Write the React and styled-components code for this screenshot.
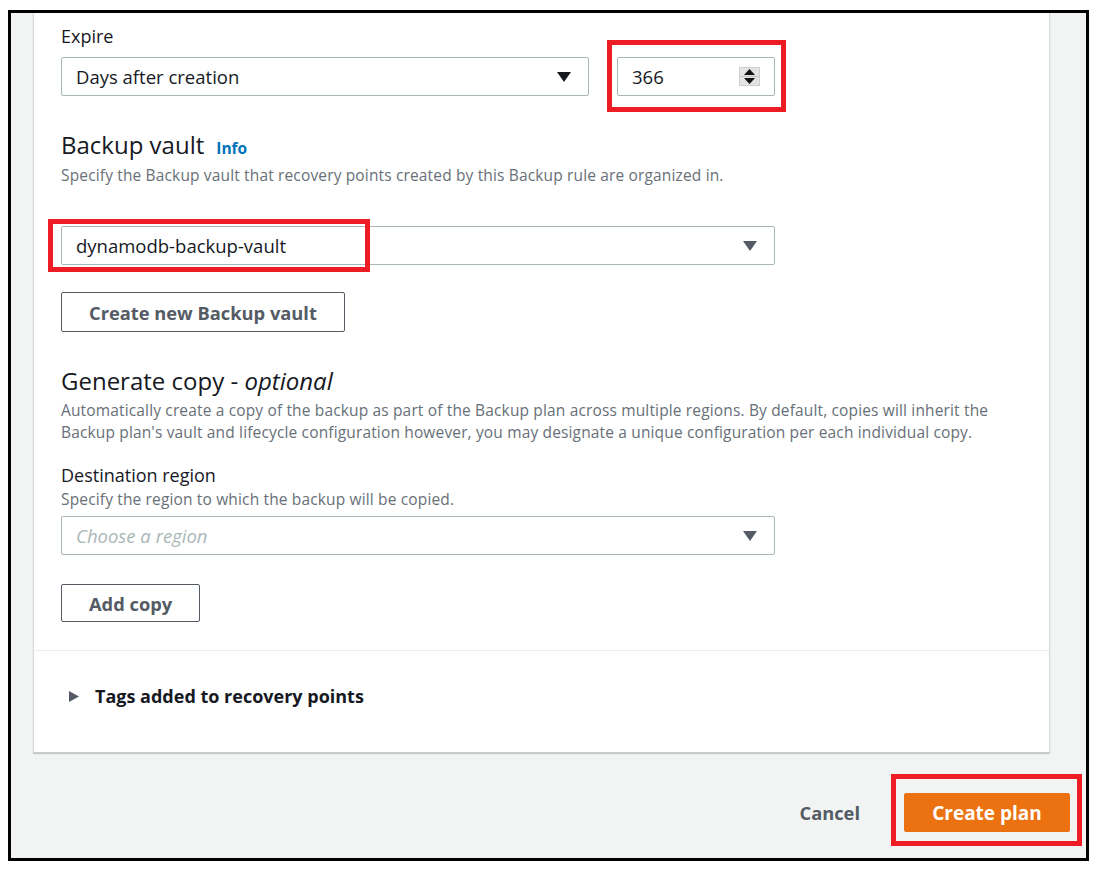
import React from "react";
import styled, { createGlobalStyle, css } from "styled-components";

const Global = createGlobalStyle`
  html, body { margin: 0; padding: 0; background: #ffffff; }
  body { font-family: "Open Sans", "Noto Sans", Arial, sans-serif; color: #16191f; }
  * { box-sizing: border-box; }
`;

const Frame = styled.div`
  margin: 10px 0 0 8px;
  width: 1081px;
  height: 851px;
  border: 3px solid #000;
  background: #f2f3f3;
  overflow: hidden;
  display: flex;
  flex-direction: column;
`;

const Card = styled.div`
  margin-left: 22px;
  width: 1017px;
  background: #ffffff;
  border-left: 1px solid #d5dbdb;
  border-right: 1px solid #d5dbdb;
  border-bottom: 1px solid #c6cccc;
  box-shadow: 0 1px 1px rgba(0, 28, 36, 0.18);
`;

const Section = styled.div`
  padding: 12px 27px 28px 27px;
  display: flex;
  flex-direction: column;
  align-items: flex-start;
`;

const Divider = styled.div`
  height: 1px;
  background: #eaeded;
`;

const Label = styled.div`
  font-size: 18px;
  line-height: 22px;
  color: #16191f;
  margin-top: ${(p) => p.$mt || 0}px;
`;

const Heading = styled.h2`
  margin: ${(p) => p.$mt || 0}px 0 0 0;
  height: 30px;
  font-size: 24px;
  line-height: 30px;
  font-weight: 400;
  color: #16191f;
  display: flex;
  align-items: baseline;
  gap: 12px;
  em { font-style: italic; }
`;

const InfoLink = styled.a`
  font-size: 15.5px;
  line-height: 1;
  font-weight: 700;
  color: #0073bb;
  text-decoration: none;
`;

const Desc = styled.p`
  margin: ${(p) => p.$mt || 0}px 0 0 0;
  font-size: 15.5px;
  letter-spacing: 0.15px;
  line-height: ${(p) => p.$lh || 20}px;
  color: #687078;
`;

const Row = styled.div`
  display: flex;
  gap: 28px;
  margin-top: ${(p) => p.$mt || 0}px;
`;

const Anchor = styled.div`
  position: relative;
  margin-top: ${(p) => p.$mt || 0}px;
`;

const Mark = styled.div`
  position: absolute;
  border: 5px solid #ee1c25;
  pointer-events: none;
  left: ${(p) => p.$l}px;
  top: ${(p) => p.$t}px;
  width: ${(p) => p.$w}px;
  height: ${(p) => p.$h}px;
`;

const Select = styled.div`
  width: ${(p) => p.$w}px;
  height: 39px;
  border: 1px solid #aab7b8;
  border-radius: 2px;
  background: #fff;
  display: flex;
  align-items: center;
  justify-content: space-between;
  padding: 0 17px 0 14px;
  font-size: 18.5px;
  color: #16191f;
  ${(p) =>
    p.$placeholder &&
    css`
      color: #aab7b8;
      font-style: italic;
    `}
`;

const NumberBox = styled(Select)`
  padding: 0 14px 0 14px;
`;

const Spinner = styled.div`
  width: 21px;
  height: 19px;
  background: #e3e3e3;
  border: 1px solid #d0d0d0;
  display: flex;
  flex-direction: column;
  align-items: center;
  justify-content: space-around;
  padding: 1px 0;
`;

const SpinLine = styled.div`
  width: 19px;
  height: 1px;
  background: #c4c4c4;
`;

const Button = styled.button`
  margin-top: ${(p) => p.$mt || 0}px;
  height: ${(p) => p.$h || 40}px;
  padding: 0 27px;
  border: 1px solid #545b64;
  border-radius: 2px;
  background: #fff;
  font-family: inherit;
  font-size: 18.3px;
  font-weight: 700;
  color: #545b64;
  cursor: pointer;
`;

const TagsSection = styled.div`
  padding: 34px 27px 45px 35px;
  display: flex;
  align-items: center;
  gap: 16px;
`;

const TagsTitle = styled.span`
  font-size: 18px;
  line-height: 22px;
  font-weight: 700;
  color: #16191f;
`;

const Footer = styled.div`
  display: flex;
  justify-content: flex-end;
  align-items: center;
  gap: 44px;
  padding: 40px 16px 0 0;
`;

const LinkButton = styled.button`
  border: 0;
  background: transparent;
  padding: 0;
  font-family: inherit;
  font-size: 18.3px;
  font-weight: 700;
  color: #545b64;
  cursor: pointer;
`;

const PrimaryButton = styled(Button)`
  height: 39px;
  width: 166px;
  padding: 0;
  border-color: #ec7211;
  background: #ec7211;
  color: #fff;
  font-size: 19px;
`;

const Caret = ({ color = "#16191f" }) => (
  <svg width="14" height="10" viewBox="0 0 14 10">
    <path d="M0 0 L14 0 L7 10 Z" fill={color} />
  </svg>
);

const RightCaret = () => (
  <svg width="10" height="11" viewBox="0 0 10 11">
    <path d="M0 0 L10 5.5 L0 11 Z" fill="#545b64" />
  </svg>
);

const SpinIcons = () => (
  <Spinner>
    <svg width="11" height="6" viewBox="0 0 11 6">
      <path d="M0 6 L5.5 0 L11 6 Z" fill="#111" />
    </svg>
    <SpinLine />
    <svg width="11" height="6" viewBox="0 0 11 6">
      <path d="M0 0 L11 0 L5.5 6 Z" fill="#111" />
    </svg>
  </Spinner>
);

export default function App() {
  return (
    <>
      <Global />
      <Frame>
        <Card>
          <Section>
            <Label>Expire</Label>
            <Row $mt={10}>
              <Select $w={528}>
                <span>Days after creation</span>
                <Caret />
              </Select>
              <Anchor>
                <Mark $l={-10} $t={-17} $w={179} $h={72} />
                <NumberBox $w={158}>
                  <span>366</span>
                  <SpinIcons />
                </NumberBox>
              </Anchor>
            </Row>

            <Heading $mt={34}>
              Backup vault <InfoLink href="#">Info</InfoLink>
            </Heading>
            <Desc $mt={5}>
              Specify the Backup vault that recovery points created by this Backup rule are organized in.
            </Desc>

            <Anchor $mt={41}>
              <Mark $l={-13} $t={-7} $w={322} $h={53} />
              <Select $w={714}>
                <span>dynamodb-backup-vault</span>
                <Caret color="#545b64" />
              </Select>
            </Anchor>

            <Button $mt={27}>Create new Backup vault</Button>

            <Heading $mt={34}>
              <span>
                Generate copy - <em>optional</em>
              </span>
            </Heading>
            <Desc $mt={3} $lh={22}>
              Automatically create a copy of the backup as part of the Backup plan across multiple regions. By default, copies will inherit the
              <br />
              Backup plan's vault and lifecycle configuration however, you may designate a unique configuration per each individual copy.
            </Desc>

            <Label $mt={21}>Destination region</Label>
            <Desc $mt={3}>Specify the region to which the backup will be copied.</Desc>
            <Anchor $mt={7}>
              <Select $w={714} $placeholder>
                <span>Choose a region</span>
                <Caret color="#545b64" />
              </Select>
            </Anchor>

            <Button $mt={29} $h={38}>Add copy</Button>
          </Section>
          <Divider />
          <TagsSection>
            <RightCaret />
            <TagsTitle>Tags added to recovery points</TagsTitle>
          </TagsSection>
        </Card>
        <Footer>
          <LinkButton>Cancel</LinkButton>
          <Anchor>
            <Mark $l={-13} $t={-19} $w={191} $h={72} />
            <PrimaryButton>Create plan</PrimaryButton>
          </Anchor>
        </Footer>
      </Frame>
    </>
  );
}
